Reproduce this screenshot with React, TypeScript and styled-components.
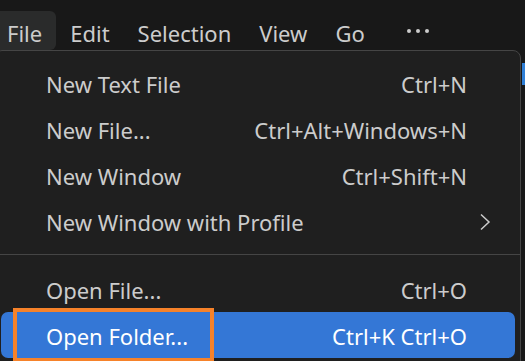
import styled, { createGlobalStyle } from "styled-components";

const GlobalStyle = createGlobalStyle`
  html, body {
    margin: 0;
    padding: 0;
    background: #181818;
    overflow: hidden;
  }
  body {
    font-family: "Noto Sans", "Open Sans", sans-serif;
  }
`;

type MenuEntry =
  | { kind: "item"; label: string; keys?: string; submenu?: boolean; active?: boolean; marked?: boolean }
  | { kind: "separator" };

const menuBarItems = ["File", "Edit", "Selection", "View", "Go"];

const fileMenu: MenuEntry[] = [
  { kind: "item", label: "New Text File", keys: "Ctrl+N" },
  { kind: "item", label: "New File...", keys: "Ctrl+Alt+Windows+N" },
  { kind: "item", label: "New Window", keys: "Ctrl+Shift+N" },
  { kind: "item", label: "New Window with Profile", submenu: true },
  { kind: "separator" },
  { kind: "item", label: "Open File...", keys: "Ctrl+O" },
  { kind: "item", label: "Open Folder...", keys: "Ctrl+K Ctrl+O", active: true, marked: true },
];

const Screen = styled.div`
  width: 525px;
  height: 361px;
  display: flex;
  flex-direction: column;
  background: #181818;
  overflow: hidden;
`;

const MenuBar = styled.div`
  display: flex;
  align-items: flex-end;
  height: 50px;
  margin-left: -7px;
  flex-shrink: 0;
`;

const MenuBarItem = styled.div<{ open?: boolean }>`
  height: 39px;
  display: flex;
  align-items: center;
  padding: 5px 14px 0 14px;
  font-size: 22px;
  color: #cccccc;
  border-radius: 6px;
  background: ${(props) => (props.open ? "#2a2b2b" : "transparent")};
  box-sizing: border-box;
`;

const MoreDots = styled.div`
  display: flex;
  gap: 5px;
  align-items: center;
  height: 39px;
  padding: 0 0 0 28px;
  box-sizing: border-box;
`;

const Dot = styled.span`
  width: 4px;
  height: 4px;
  border-radius: 50%;
  background: #cccccc;
`;

const Body = styled.div`
  display: flex;
  flex: 1;
  min-height: 0;
`;

const MenuPanel = styled.div`
  margin-left: -6px;
  width: 527px;
  flex-shrink: 0;
  background: #1f1f1f;
  border: 1px solid #454545;
  border-radius: 8px;
  padding: 9px 0 0 0;
  box-sizing: border-box;
  height: 330px;
  display: flex;
  flex-direction: column;
`;

const Row = styled.div<{ active?: boolean }>`
  position: relative;
  height: 46px;
  margin: 0 5px 0 6px;
  padding: 1px 0 0 45px;
  display: flex;
  align-items: center;
  border-radius: 7px;
  font-size: 22px;
  color: ${(props) => (props.active ? "#ffffff" : "#cccccc")};
  background: ${(props) => (props.active ? "#3477d6" : "transparent")};
  box-sizing: border-box;
`;

const Label = styled.span`
  flex: 1;
  white-space: nowrap;
`;

const Keys = styled.span`
  white-space: nowrap;
`;

const SubmenuSlot = styled.span`
  width: 48px;
  display: flex;
  align-items: center;
  padding-left: 12px;
  box-sizing: border-box;
`;

const Separator = styled.div`
  height: 1px;
  margin: 10px 0 11px 0;
  background: #454545;
`;

const Marker = styled.div`
  position: absolute;
  left: 12px;
  top: -4px;
  width: 201px;
  height: 54px;
  border: 4px solid #f6822a;
  box-sizing: border-box;
`;

const SideStrip = styled.div`
  flex: 1;
  display: flex;
  flex-direction: column;
  padding-top: 13px;
`;

const SideMark = styled.div`
  width: 3px;
  height: 22px;
  margin-left: 1px;
  background: #2f7fd6;
`;

function Chevron() {
  return (
    <svg width="12" height="18" viewBox="0 0 12 18">
      <path d="M2 1.5 L10 9 L2 16.5" fill="none" stroke="#cccccc" strokeWidth="1.5" />
    </svg>
  );
}

function drawMenuEntries(entries: MenuEntry[]) {
  return entries.map((entry, index) => {
    if (entry.kind === "separator") {
      return <Separator key={index} />;
    }
    return (
      <Row active={entry.active} key={index}>
        <Label>{entry.label}</Label>
        {entry.keys && <Keys>{entry.keys}</Keys>}
        <SubmenuSlot>{entry.submenu && <Chevron />}</SubmenuSlot>
        {entry.marked && <Marker />}
      </Row>
    );
  });
}

export default function App() {
  return (
    <>
      <GlobalStyle />
      <Screen>
        <MenuBar>
          {menuBarItems.map((title, index) => (
            <MenuBarItem open={index === 0} key={title}>
              {title}
            </MenuBarItem>
          ))}
          <MoreDots>
            <Dot />
            <Dot />
            <Dot />
          </MoreDots>
        </MenuBar>
        <Body>
          <MenuPanel>{drawMenuEntries(fileMenu)}</MenuPanel>
          <SideStrip>
            <SideMark />
          </SideStrip>
        </Body>
      </Screen>
    </>
  );
}
